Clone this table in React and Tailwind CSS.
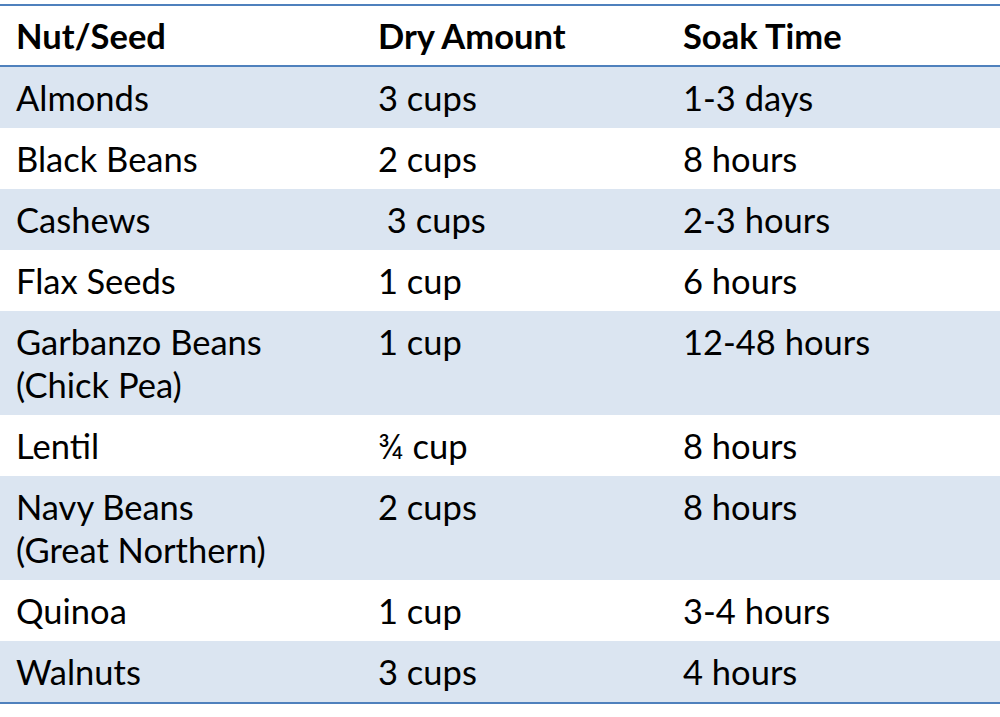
import React from "react";

const rows = [
  { name: ["Almonds"], dry: "3 cups", soak: "1-3 days" },
  { name: ["Black Beans"], dry: "2 cups", soak: "8 hours" },
  { name: ["Cashews"], dry: "\u00a03 cups", soak: "2-3 hours" },
  { name: ["Flax Seeds"], dry: "1 cup", soak: "6 hours" },
  { name: ["Garbanzo Beans", "(Chick Pea)"], dry: "1 cup", soak: "12-48 hours" },
  { name: ["Lentil"], dry: "¾ cup", soak: "8 hours" },
  { name: ["Navy Beans", "(Great Northern)"], dry: "2 cups", soak: "8 hours" },
  { name: ["Quinoa"], dry: "1 cup", soak: "3-4 hours" },
  { name: ["Walnuts"], dry: "3 cups", soak: "4 hours" },
];

const App = () => {
  return (
    <div
      className="w-[1000px] h-[717px] bg-white pt-[4px] text-black"
      style={{ fontFamily: "Lato, 'Open Sans', sans-serif" }}
    >
      <div className="border-t-2 border-b-2 border-[#4f81bd]">
        <div className="grid grid-cols-[362px_305px_333px] text-[34.5px] leading-[43px] font-bold border-b-2 border-[#4f81bd] bg-white">
          <div className="pl-[16px] pt-[8px] pb-[8px]">Nut/Seed</div>
          <div className="pl-[16px] pt-[8px] pb-[8px]">Dry Amount</div>
          <div className="pl-[16px] pt-[8px] pb-[8px]">Soak Time</div>
        </div>
        {rows.map((r, i) => (
          <div
            key={i}
            className={
              "grid grid-cols-[362px_305px_333px] text-[34.5px] leading-[43px] " +
              (i % 2 === 0 ? "bg-[#dbe5f1]" : "bg-white")
            }
          >
            <div className="pl-[16px] py-[9px]">
              {r.name.map((n, j) => (
                <div key={j}>{n}</div>
              ))}
            </div>
            <div className="pl-[16px] py-[9px]">{r.dry}</div>
            <div className="pl-[16px] py-[9px]">{r.soak}</div>
          </div>
        ))}
      </div>
    </div>
  );
};

export default App;
